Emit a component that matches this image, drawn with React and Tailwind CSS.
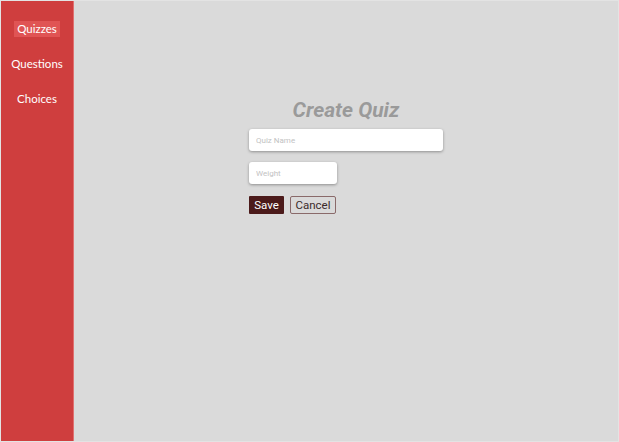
import { useState } from 'react';

const links = ['Quizzes', 'Questions', 'Choices'];

export default function App() {
  const [active, setActive] = useState('Quizzes');
  const [name, setName] = useState('');
  const [weight, setWeight] = useState('');

  return (
    <div className="flex h-[442px] w-[619px] border border-[#e3e3e3] bg-[#dadada]">
      {/* Sidebar */}
      <nav className="flex w-[73px] shrink-0 flex-col items-center border-r border-[#e07070] bg-[#cf3e3e] pt-[20px] font-['Lato',sans-serif] text-[11.5px] text-white">
        {links.map((link) => (
          <button
            key={link}
            onClick={() => setActive(link)}
            className={`mb-[19px] h-[16px] px-[3px] leading-[16px] ${
              active === link ? 'bg-[#e05454]' : ''
            }`}
          >
            {link}
          </button>
        ))}
      </nav>

      {/* Main */}
      <main className="flex flex-1 justify-center pt-[96px]">
        <div className="w-[194px] font-['Roboto',sans-serif]">
          <h1 className="text-center text-[21px] font-bold italic leading-[26px] text-[#9a9a9a]">
            Create Quiz
          </h1>
          <input
            value={name}
            onChange={(e) => setName(e.target.value)}
            placeholder="Quiz Name"
            className="mt-[6px] block h-[22px] w-full rounded-[3px] bg-white px-[7px] text-[8px] text-gray-700 shadow-[0_1px_3px_rgba(0,0,0,0.35)] outline-none placeholder:text-[#c2c2c2]"
          />
          <input
            value={weight}
            onChange={(e) => setWeight(e.target.value)}
            placeholder="Weight"
            className="mt-[11px] block h-[22px] w-[88px] rounded-[3px] bg-white px-[7px] text-[8px] text-gray-700 shadow-[0_1px_3px_rgba(0,0,0,0.35)] outline-none placeholder:text-[#c2c2c2]"
          />
          <div className="mt-[12px] flex gap-[6px] text-[11.5px]">
            <button className="h-[18px] w-[35px] rounded-[1px] bg-[#4b1a1a] leading-[18px] text-white">
              Save
            </button>
            <button className="h-[18px] w-[46px] rounded-[2px] border border-[#8a6a6a] leading-[16px] text-[#3a2a2a]">
              Cancel
            </button>
          </div>
        </div>
      </main>
    </div>
  );
}
